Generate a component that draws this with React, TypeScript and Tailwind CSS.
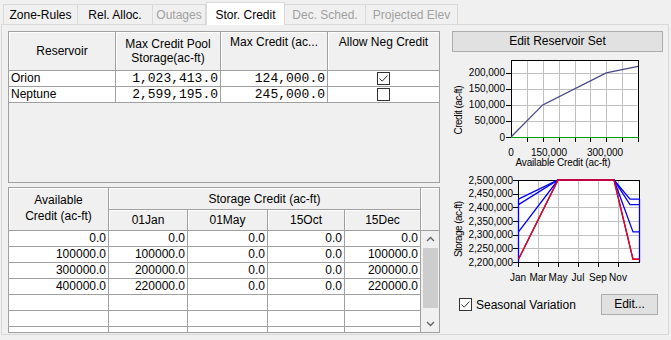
import React from 'react';

//----------------------------------------------------------------------

const tabs = [
  { label: 'Zone-Rules', w: 'w-[75px]', state: 'on' },
  { label: 'Rel. Alloc.', w: 'w-[76px]', state: 'on' },
  { label: 'Outages', w: 'w-[54px]', state: 'off' },
  { label: 'Stor. Credit', w: 'w-[79px]', state: 'sel' },
  { label: 'Dec. Sched.', w: 'w-[82px]', state: 'off' },
  { label: 'Projected Elev', w: 'w-[93px]', state: 'off' },
];

const reservoirs = [
  { name: 'Orion', pool: '1,023,413.0', credit: '124,000.0', neg: true },
  { name: 'Neptune', pool: '2,599,195.0', credit: '245,000.0', neg: false },
];

const creditRows = [
  ['0.0', '0.0', '0.0', '0.0', '0.0'],
  ['100000.0', '100000.0', '0.0', '0.0', '100000.0'],
  ['300000.0', '200000.0', '0.0', '0.0', '200000.0'],
  ['400000.0', '220000.0', '0.0', '0.0', '220000.0'],
  ['', '', '', '', ''],
  ['', '', '', '', ''],
  ['', '', '', '', ''],
];

const headCell =
  'flex items-center justify-center text-center leading-[14px] bg-[#f0f0f0] border-r border-b border-[#a0a0a0] shadow-[inset_1px_1px_0_#fff]';

function CheckBox({ checked }: { checked: boolean }) {
  return (
    <div className="w-[13px] h-[13px] border border-[#333] bg-white flex items-center justify-center">
      {checked && (
        <svg width="11" height="11" viewBox="0 0 11 11">
          <path d="M1.5 5.5 L4.2 8.2 L9.5 2.5" fill="none" stroke="#333" strokeWidth="1" />
        </svg>
      )}
    </div>
  );
}

function CreditChart() {
  const px = (v: number) => 511 + (v / 400000) * 127;
  const py = (v: number) => 138 - (v / 240000) * 77;
  const pts = [
    [0, 0],
    [100000, 100000],
    [300000, 200000],
    [400000, 220000],
  ];
  const yTicks = [0, 50000, 100000, 150000, 200000];
  const vGrid = [1, 2, 3, 4, 5, 6, 7].map((i) => 511 + i * 15.875);
  return (
    <svg width={211} height={117} viewBox="452 55 211 117" className="block">
      <rect x={511} y={61} width={127} height={77} fill="#fff" />
      {vGrid.map((x) => (
        <line key={x} x1={Math.round(x) + 0.5} x2={Math.round(x) + 0.5} y1={61} y2={138} stroke="#c0c0c0" />
      ))}
      {yTicks.slice(1).map((v) => (
        <line key={v} x1={511} x2={638} y1={Math.round(py(v)) + 0.5} y2={Math.round(py(v)) + 0.5} stroke="#c0c0c0" />
      ))}
      <rect x={511.5} y={61.5} width={127} height={77} fill="none" stroke="#000" />
      <line x1={511} x2={639} y1={138.5} y2={138.5} stroke="#00a000" strokeWidth={1.2} />
      <polyline points={pts.map(([x, y]) => `${px(x)},${py(y)}`).join(' ')} fill="none" stroke="#464688" strokeWidth={1.3} />
      {yTicks.map((v) => (
        <g key={v}>
          <line x1={506} x2={511} y1={Math.round(py(v)) + 0.5} y2={Math.round(py(v)) + 0.5} stroke="#000" />
          <text x={505} y={py(v) + 3.5} fontSize={10} textAnchor="end" fontFamily="Liberation Sans, Arial, sans-serif">
            {v === 0 ? '0' : v.toLocaleString('en-US')}
          </text>
        </g>
      ))}
      {[0, ...vGrid, 638].map((x) => (
        <line key={x} x1={Math.round(x) + 0.5} x2={Math.round(x) + 0.5} y1={139} y2={143} stroke="#000" />
      ))}
      <text x={511} y={157} fontSize={10} textAnchor="middle" fontFamily="Liberation Sans, Arial, sans-serif">0</text>
      <text x={549} y={157} fontSize={10} textAnchor="middle" fontFamily="Liberation Sans, Arial, sans-serif">150,000</text>
      <text x={605} y={157} fontSize={10} textAnchor="middle" fontFamily="Liberation Sans, Arial, sans-serif">300,000</text>
      <text x={563} y={167} fontSize={10} textAnchor="middle" textLength={95} fontFamily="Liberation Sans, Arial, sans-serif">
        Available Credit (ac-ft)
      </text>
      <text
        x={0}
        y={0}
        fontSize={10}
        textAnchor="middle"
        textLength={49}
        transform="translate(462 111) rotate(-90)"
        fontFamily="Liberation Sans, Arial, sans-serif"
      >
        Credit (ac-ft)
      </text>
    </svg>
  );
}

function StorageChart() {
  const py = (v: number) => 263 - ((v - 2200000) / 300000) * 82;
  const yTicks = [2200000, 2250000, 2300000, 2350000, 2400000, 2450000, 2500000];
  const months = ['Jan', 'Mar', 'May', 'Jul', 'Sep', 'Nov'];
  const top = 181;
  const lefts = [2430000, 2410000, 2310000, 2210000];
  const rightX = [630, 630, 633, 633];
  return (
    <svg width={211} height={118} viewBox="452 172 211 118" className="block">
      <rect x={518} y={181} width={121} height={82} fill="#fff" />
      {[538, 558, 578, 598, 618].map((x) => (
        <line key={x} x1={x + 0.5} x2={x + 0.5} y1={181} y2={263} stroke="#c0c0c0" />
      ))}
      {yTicks.slice(1, -1).map((v) => (
        <line key={v} x1={518} x2={639} y1={Math.round(py(v)) + 0.5} y2={Math.round(py(v)) + 0.5} stroke="#c0c0c0" />
      ))}
      <rect x={518.5} y={181.5} width={121} height={82} fill="none" stroke="#000" />
      {lefts.map((v, i) => (
        <g key={v}>
          <polyline
            points={`518.5,${py(v)} 558,${top} 614,${top} ${rightX[i]},${py(v)} 639.5,${py(v)}`}
            fill="none"
            stroke="#0000ff"
            strokeWidth={1.3}
          />
        </g>
      ))}
      <line x1={518.5} x2={518.5} y1={py(2430000)} y2={263} stroke="#0000ff" strokeWidth={1.3} />
      <line x1={639.5} x2={639.5} y1={py(2430000)} y2={263} stroke="#0000ff" strokeWidth={1.3} />
      <polyline
        points={`518.5,${py(2210000)} 558,${top} 614,${top} 633,${py(2210000)} 639.5,${py(2210000)}`}
        fill="none"
        stroke="#ff0000"
        strokeWidth={1.3}
      />
      {yTicks.map((v) => (
        <g key={v}>
          <line x1={513} x2={518} y1={Math.round(py(v)) + 0.5} y2={Math.round(py(v)) + 0.5} stroke="#000" />
          <text x={513} y={py(v) + 3.5} fontSize={10} textAnchor="end" fontFamily="Liberation Sans, Arial, sans-serif">
            {v.toLocaleString('en-US')}
          </text>
        </g>
      ))}
      {months.map((m, i) => (
        <g key={m}>
          <line x1={518 + i * 20 + 0.5} x2={518 + i * 20 + 0.5} y1={264} y2={268} stroke="#000" />
          <text x={518 + i * 20} y={282} fontSize={10} textAnchor="middle" fontFamily="Liberation Sans, Arial, sans-serif">
            {m}
          </text>
        </g>
      ))}
      <text
        x={0}
        y={0}
        fontSize={10}
        textAnchor="middle"
        textLength={56}
        transform="translate(462 230) rotate(-90)"
        fontFamily="Liberation Sans, Arial, sans-serif"
      >
        Storage (ac-ft)
      </text>
    </svg>
  );
}

function Chevron({ up }: { up: boolean }) {
  return (
    <svg width="9" height="6" viewBox="0 0 9 6">
      <path d={up ? 'M1 5 L4.5 1.5 L8 5' : 'M1 1 L4.5 4.5 L8 1'} fill="none" stroke="#606060" strokeWidth="1.3" />
    </svg>
  );
}

export default function App() {
  return (
    <div className="w-[671px] h-[340px] bg-[#f0f0f0] overflow-hidden font-['Liberation_Sans',Arial,sans-serif] text-[12px] text-black">
      {/* tab strip */}
      <div className="h-[24px] flex items-end pl-[3px]">
        {tabs.map((t) =>
          t.state === 'sel' ? (
            <div
              key={t.label}
              className={`${t.w} h-[23px] bg-white border border-b-0 border-[#d9d9d9] flex items-start pt-[3px] justify-center relative z-10 -mb-[1px]`}
            >
              {t.label}
            </div>
          ) : (
            <div
              key={t.label}
              className={`${t.w} h-[20px] border border-b-0 border-[#d9d9d9] -ml-[1px] first:ml-0 flex items-center justify-center ${
                t.state === 'off' ? 'text-[#a0a0a0]' : ''
              }`}
            >
              {t.label}
            </div>
          ),
        )}
      </div>

      {/* content panel */}
      <div className="ml-[1px] w-[668px] h-[311px] border border-[#d9d9d9] flex">
        {/* left column */}
        <div className="pl-[6px] pt-[6px] w-[438px] flex flex-col gap-[4px]">
          {/* reservoir table */}
          <div className="w-[432px] h-[152px] border border-[#a0a0a0] bg-[#f0f0f0]">
            <div className="grid grid-cols-[107px_105px_107px_111px] grid-rows-[39px]">
              <div className={headCell}>Reservoir</div>
              <div className={headCell}>
                Max Credit Pool
                <br />
                Storage(ac-ft)
              </div>
              <div className={`${headCell} items-start pt-[3px]`}>Max Credit (ac...</div>
              <div className={`${headCell} items-start pt-[3px] border-r-0`}>Allow Neg Credit</div>
            </div>
            {reservoirs.map((r) => (
              <div key={r.name} className="grid grid-cols-[107px_105px_107px_111px] h-[16px] bg-white">
                <div className="border-r border-b border-[#a0a0a0] pl-[2px] leading-[15px]">{r.name}</div>
                <div className="border-r border-b border-[#a0a0a0] pr-[2px] text-right font-['Liberation_Mono',monospace] text-[13px] leading-[15px]">
                  {r.pool}
                </div>
                <div className="border-r border-b border-[#a0a0a0] pr-[2px] text-right font-['Liberation_Mono',monospace] text-[13px] leading-[15px]">
                  {r.credit}
                </div>
                <div className="border-b border-[#a0a0a0] flex items-center justify-center">
                  <CheckBox checked={r.neg} />
                </div>
              </div>
            ))}
          </div>

          {/* storage credit table */}
          <div className="w-[432px] h-[146px] border border-[#a0a0a0] overflow-hidden bg-white">
            <div className="grid grid-cols-[100px_79px_80px_77px_76px_18px] grid-rows-[22px_21px]">
              <div className={`${headCell} row-span-2 leading-[16px] pb-[3px]`}>
                Available
                <br />
                Credit (ac-ft)
              </div>
              <div className={`${headCell} col-span-4`}>Storage Credit (ac-ft)</div>
              <div className={`${headCell} row-span-2 border-r-0`} />
              <div className={headCell}>01Jan</div>
              <div className={headCell}>01May</div>
              <div className={headCell}>15Oct</div>
              <div className={headCell}>15Dec</div>
            </div>
            <div className="flex h-[101px]">
              <div className="w-[412px] overflow-hidden">
                {creditRows.map((row, i) => (
                  <div key={i} className="grid grid-cols-[100px_79px_80px_77px_76px] h-[16px]">
                    {row.map((v, j) => (
                      <div
                        key={j}
                        className={`border-b border-[#a0a0a0] text-right pr-[2px] leading-[15px] ${j < 4 ? 'border-r' : 'border-r'}`}
                      >
                        {v}
                      </div>
                    ))}
                  </div>
                ))}
              </div>
              <div className="w-[18px] bg-[#f0f0f0] flex flex-col items-center">
                <div className="h-[16px] flex items-center justify-center">
                  <Chevron up />
                </div>
                <div className="w-[15px] h-[60px] bg-[#cdcdcd] mt-[1px]" />
                <div className="flex-1" />
                <div className="h-[16px] flex items-center justify-center">
                  <Chevron up={false} />
                </div>
              </div>
            </div>
          </div>
        </div>

        {/* right column */}
        <div className="ml-[12px] w-[211px] pt-[6px] flex flex-col">
          <button className="w-[211px] h-[21px] bg-[#e1e1e1] border border-[#adadad] text-[12px] leading-[19px]">
            Edit Reservoir Set
          </button>
          <div className="mt-[2px]">
            <CreditChart />
          </div>
          <StorageChart />
          <div className="mt-[5px] h-[21px] flex items-center">
            <div className="ml-[7px]">
              <CheckBox checked />
            </div>
            <span className="ml-[4px]">Seasonal Variation</span>
            <button className="ml-auto mr-[5px] w-[57px] h-[21px] bg-[#e1e1e1] border border-[#adadad] text-[12px] leading-[19px]">
              Edit...
            </button>
          </div>
        </div>
      </div>
    </div>
  );
}
